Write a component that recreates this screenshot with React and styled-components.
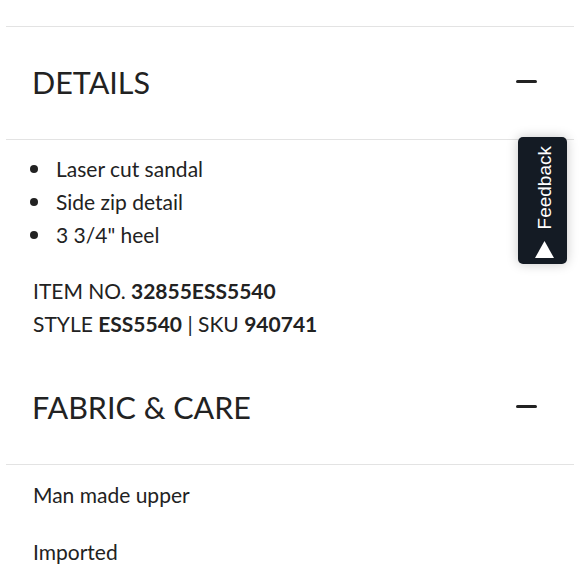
import React from "react";
import styled, { createGlobalStyle } from "styled-components";

const GlobalStyle = createGlobalStyle`
  html, body {
    margin: 0;
    padding: 0;
    background: #ffffff;
  }
  body {
    font-family: Lato, "Open Sans", sans-serif;
    color: #222222;
  }
`;

const Page = styled.div`
  padding: 26px 6px 0;
  position: relative;
  min-height: 554px;
`;

const Header = styled.div`
  height: 109px;
  display: flex;
  align-items: center;
  justify-content: space-between;
  padding: 0 37px 3px 26px;
  border-bottom: 1px solid #e3e3e3;
  border-top: ${(p) => (p.$top ? "1px solid #e3e3e3" : "none")};
  margin-top: ${(p) => (p.$top ? "0" : "12px")};
`;

const Title = styled.h2`
  margin: 0;
  font-size: 30.5px;
  font-weight: 400;
  letter-spacing: 0;
  color: #222;
`;

const Minus = styled.span`
  display: block;
  width: 21px;
  height: 3px;
  border-radius: 2px;
  background: #222;
`;

const Body = styled.div`
  padding: ${(p) => (p.$loose ? "13px" : "12px")} 27px 0;
  font-size: 21px;
  line-height: 33px;
`;

const List = styled.ul`
  list-style: none;
  margin: 0 0 23px;
  padding: 0;
`;

const Item = styled.li`
  position: relative;
  padding-left: 23px;
  &::before {
    content: "";
    position: absolute;
    left: -3px;
    top: 13px;
    width: 8px;
    height: 8px;
    border-radius: 50%;
    background: #222;
  }
`;

const Para = styled.p`
  margin: 0 0 ${(p) => (p.$gap ? "24px" : "0")};
  b {
    font-weight: 700;
  }
`;

const FeedbackTab = styled.button`
  position: absolute;
  top: 137px;
  left: 518px;
  width: 49px;
  height: 127px;
  border: none;
  border-radius: 5px;
  background: #141b24;
  box-shadow: 0 0 12px rgba(0, 0, 0, 0.22);
  display: flex;
  flex-direction: column;
  align-items: center;
  padding: 9px 0 0;
  gap: 12px;
  cursor: pointer;
`;

const TabLabel = styled.span`
  writing-mode: vertical-rl;
  transform: rotate(180deg);
  font-family: "Liberation Sans", Arial, sans-serif;
  font-size: 19px;
  line-height: 1;
  color: #ffffff;
  margin-left: 4px;
`;

const Arrow = () => (
  <svg width="19" height="17" viewBox="0 0 19 17" style={{ marginLeft: 4 }}>
    <polygon points="9.5,0 19,17 0,17" fill="#fff" />
  </svg>
);

export default function App() {
  return (
    <>
      <GlobalStyle />
      <Page>
        <Header $top>
          <Title>DETAILS</Title>
          <Minus />
        </Header>
        <Body>
          <List>
            <Item>Laser cut sandal</Item>
            <Item>Side zip detail</Item>
            <Item>3 3/4" heel</Item>
          </List>
          <Para>
            ITEM NO. <b>32855ESS5540</b>
          </Para>
          <Para>
            STYLE <b>ESS5540</b> | SKU <b>940741</b>
          </Para>
        </Body>
        <Header>
          <Title>FABRIC &amp; CARE</Title>
          <Minus />
        </Header>
        <Body $loose>
          <Para $gap>Man made upper</Para>
          <Para>Imported</Para>
        </Body>
        <FeedbackTab>
          <TabLabel>Feedback</TabLabel>
          <Arrow />
        </FeedbackTab>
      </Page>
    </>
  );
}
